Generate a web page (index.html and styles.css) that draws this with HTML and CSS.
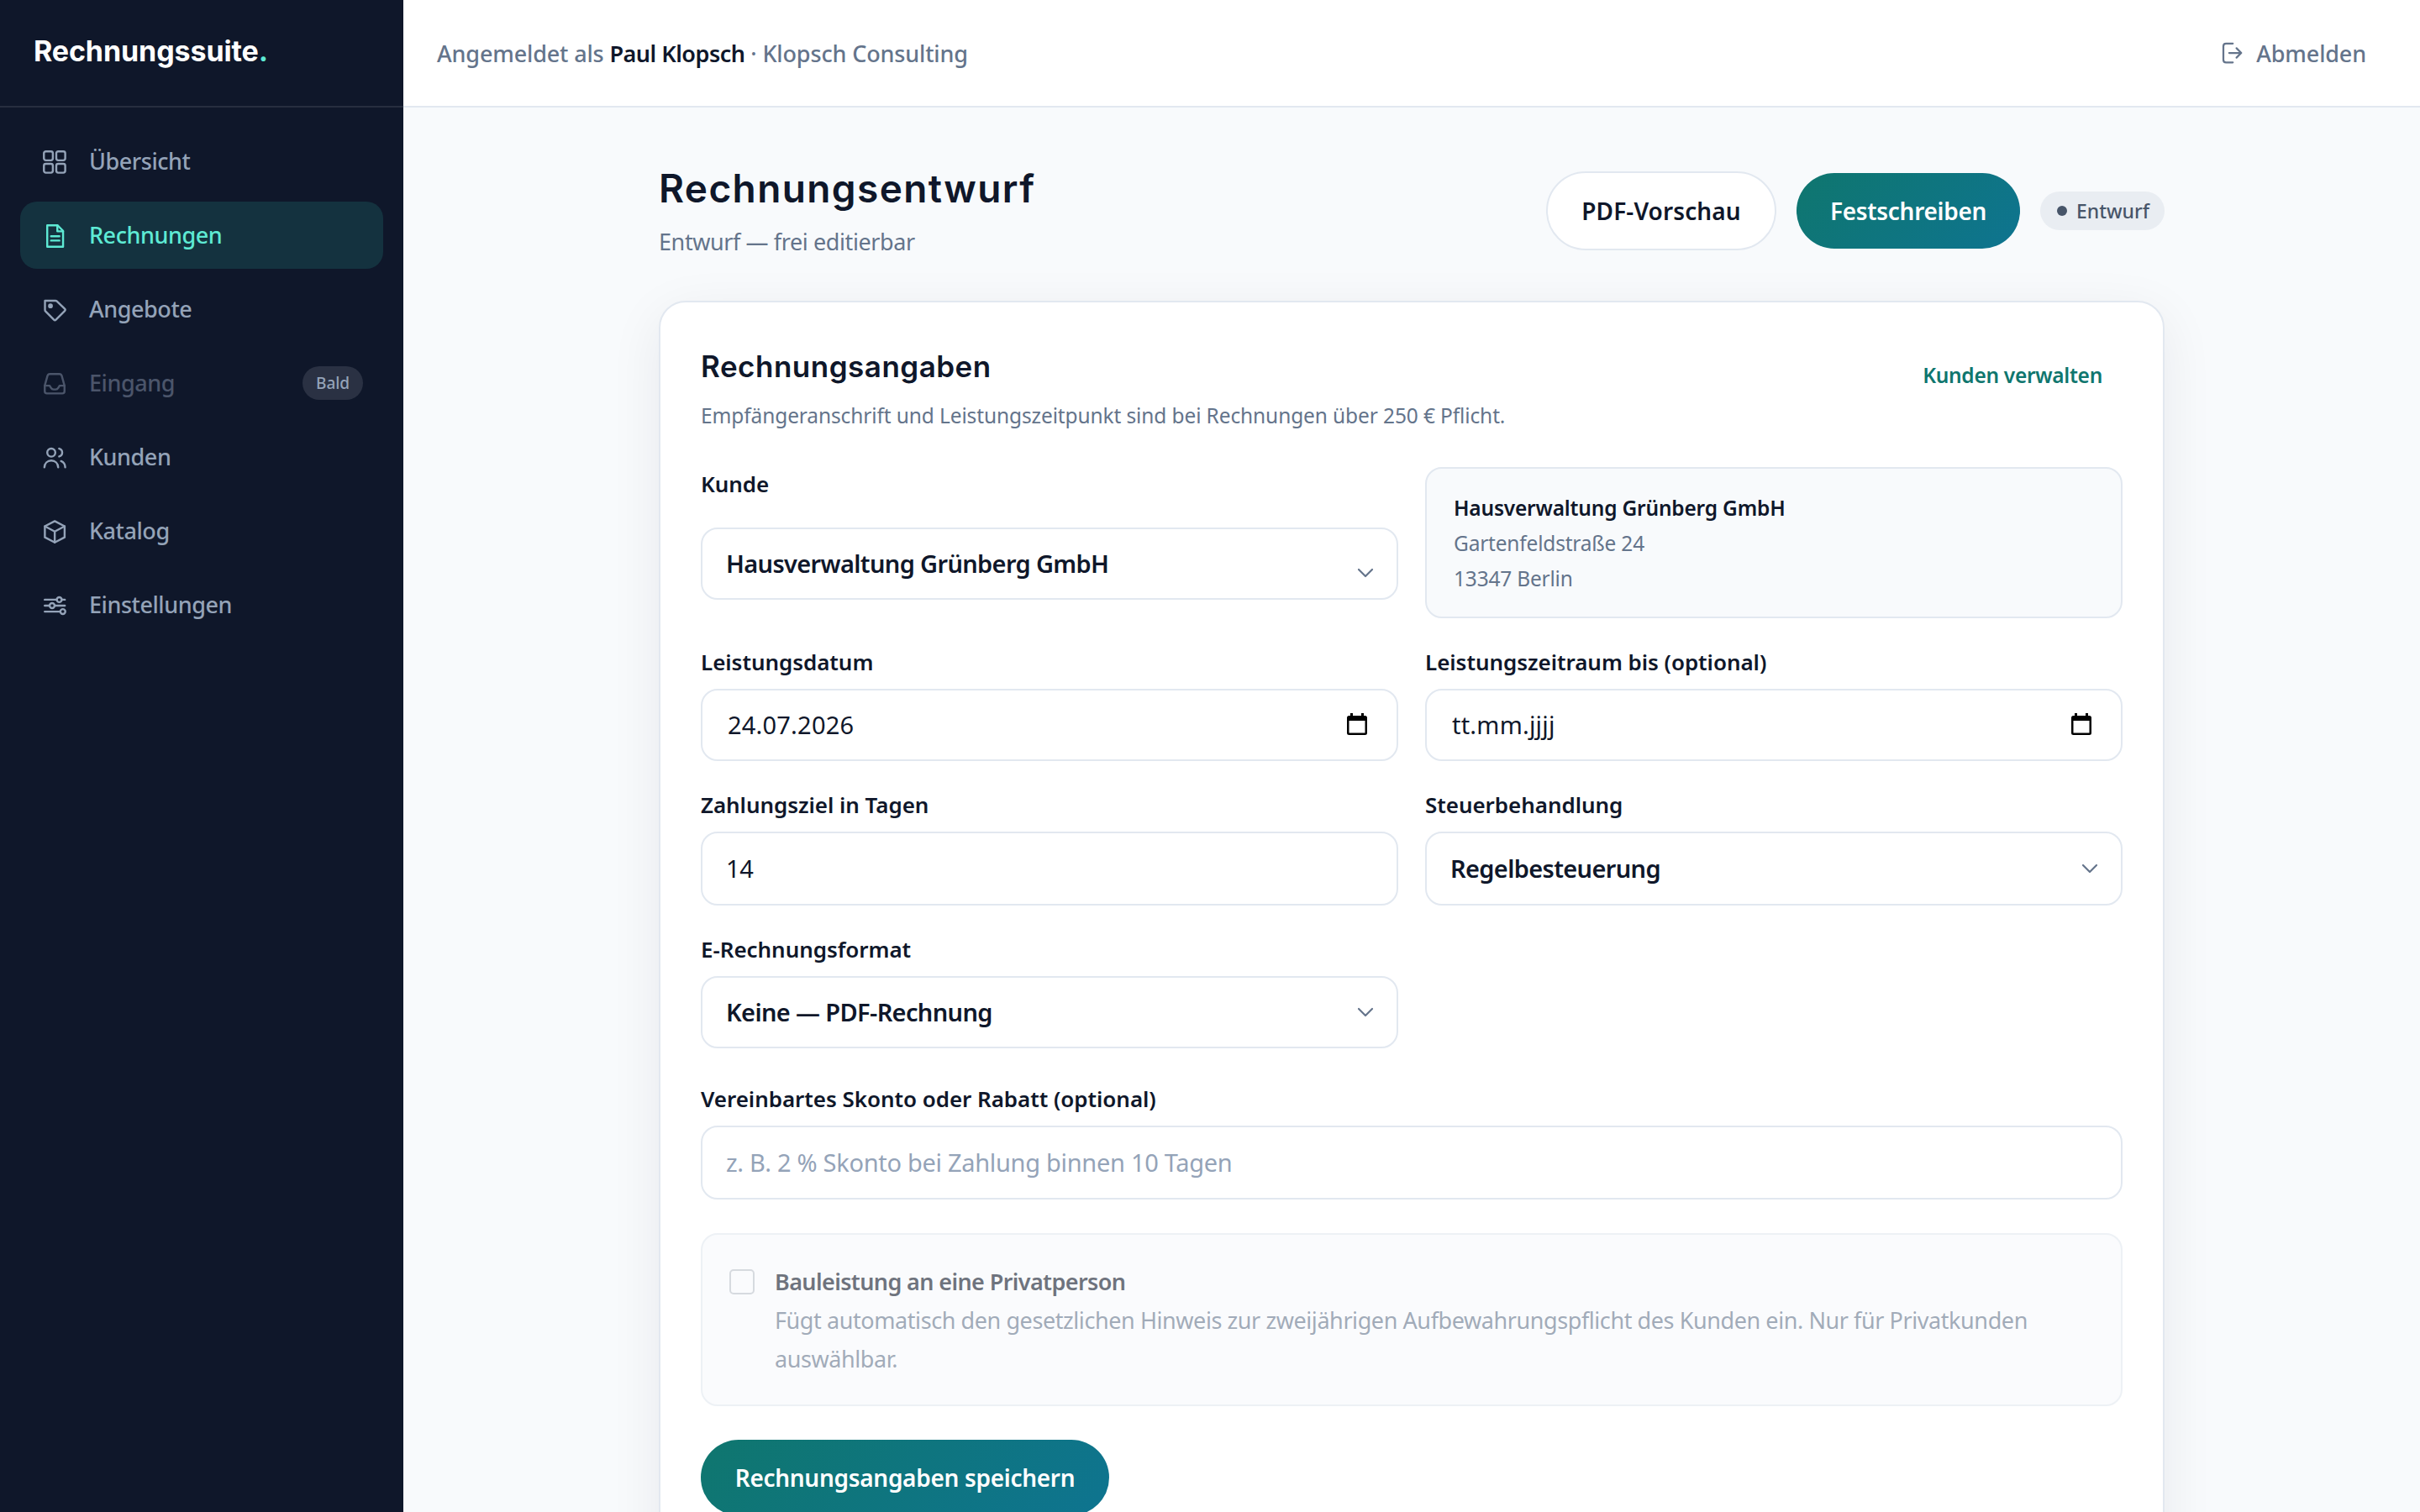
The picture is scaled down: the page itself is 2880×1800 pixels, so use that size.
FILE: index.html
```html
<!DOCTYPE html>
<html lang="de">
<head>
    <meta charset="UTF-8">
    <meta name="viewport" content="width=device-width, initial-scale=1.0">
    <title>Rechnungsentwurf - Rechnungssuite</title>
    <link rel="stylesheet" href="styles.css">
</head>
<body>
    <aside class="sidebar">
        <div class="brand">Rechnungssuite<span class="brand-dot">.</span></div>
        <nav class="nav">
            <a class="nav-item">
                <svg class="icon" viewBox="0 0 24 24"><rect x="3" y="3" width="7.5" height="7.5" rx="1.6"/><rect x="13.4" y="3" width="7.5" height="7.5" rx="1.6"/><rect x="3" y="13.4" width="7.5" height="7.5" rx="1.6"/><rect x="13.4" y="13.4" width="7.5" height="7.5" rx="1.6"/></svg>
                <span>Übersicht</span>
            </a>
            <a class="nav-item active">
                <svg class="icon" viewBox="0 0 24 24"><path d="M5.8 3h8.7l4.6 4.6V21H5.8z"/><path d="M14.3 3v5h4.8M9 12.2h7M9 15.8h7"/></svg>
                <span>Rechnungen</span>
            </a>
            <a class="nav-item">
                <svg class="icon" viewBox="0 0 24 24"><path d="M3.9 4.2h8.8c.5 0 .9.2 1.2.5l6.6 6.4c.5.5.5 1.2 0 1.7l-7.4 7.4c-.5.5-1.2.5-1.7 0l-7-7c-.3-.3-.5-.7-.5-1.2z"/><circle class="dot" cx="8.5" cy="8.6" r="2"/></svg>
                <span>Angebote</span>
            </a>
            <a class="nav-item disabled">
                <svg class="icon" viewBox="0 0 24 24"><path d="M3.7 13.5h4.1l1.1 1.8c.5.9 1.3 1.4 2.2 1.4h1.8c.9 0 1.7-.5 2.2-1.4l1.1-1.8h4.1"/><path d="M3.7 13.5 6 5.2c.3-.9 1-1.5 2-1.5h8c1 0 1.7.6 2 1.5l2.3 8.3v4.7c0 1.1-.8 1.8-1.8 1.8h-13c-1 0-1.8-.7-1.8-1.8z"/></svg>
                <span>Eingang</span>
                <span class="soon">Bald</span>
            </a>
            <a class="nav-item">
                <svg class="icon" viewBox="0 0 24 24"><circle cx="9.2" cy="7.6" r="3.4"/><path d="M3.4 20c.2-3.3 2.5-5.7 5.8-5.7s5.6 2.4 5.8 5.7M15.8 4.3a3.4 3.4 0 0 1 0 6.6M17.4 14.8c2.1.8 3.4 2.7 3.5 5.2"/></svg>
                <span>Kunden</span>
            </a>
            <a class="nav-item">
                <svg class="icon" viewBox="0 0 24 24"><path d="M12.1 3.1l8.3 4.3v9.3l-8.3 4.3-8.3-4.3V7.4z"/><path d="M3.8 7.4l8.3 4.4 8.3-4.4M12.1 11.8V21"/></svg>
                <span>Katalog</span>
            </a>
            <a class="nav-item">
                <svg class="icon" viewBox="0 0 24 24"><path d="M3.7 7h10M18 7h2.6M3.7 12h4M12 12h8.6M3.7 17h13"/><circle cx="15.9" cy="7" r="2.1"/><circle cx="9.9" cy="12" r="2.1"/><circle cx="18.9" cy="17" r="2.1"/></svg>
                <span>Einstellungen</span>
            </a>
        </nav>
    </aside>

    <div class="page">
        <header class="topbar">
            <div class="user">Angemeldet als <strong>Paul Klopsch</strong> · Klopsch Consulting</div>
            <a class="logout">
                <svg class="logout-icon" viewBox="0 0 24 24"><path d="M13 3H6.5C5.1 3 4 4.1 4 5.5v13C4 19.9 5.1 21 6.5 21H13M9.5 12H21M16.5 7.5L21 12l-4.5 4.5"/></svg>
                <span>Abmelden</span>
            </a>
        </header>

        <main class="content">
            <div class="page-head">
                <div>
                    <h1>Rechnungsentwurf</h1>
                    <p class="subtitle">Entwurf — frei editierbar</p>
                </div>
                <div class="actions">
                    <button class="btn btn-light">PDF-Vorschau</button>
                    <button class="btn btn-primary">Festschreiben</button>
                    <span class="status">Entwurf</span>
                </div>
            </div>

            <section class="card">
                <div class="card-head">
                    <div>
                        <h2>Rechnungsangaben</h2>
                        <p class="hint">Empfängeranschrift und Leistungszeitpunkt sind bei Rechnungen über 250 € Pflicht.</p>
                    </div>
                    <a class="link">Kunden verwalten</a>
                </div>

                <div class="form-grid">
                    <div class="field field-customer">
                        <label>Kunde</label>
                        <div class="control">
                            <select><option>Hausverwaltung Grünberg GmbH</option></select>
                            <svg class="chevron" viewBox="0 0 20 12"><path d="M2 2l8 8 8-8"/></svg>
                        </div>
                    </div>
                    <div class="address">
                        <strong>Hausverwaltung Grünberg GmbH</strong>
                        <span>Gartenfeldstraße 24</span>
                        <span>13347 Berlin</span>
                    </div>
                    <div class="field">
                        <label>Leistungsdatum</label>
                        <div class="control">
                            <input class="date" type="text" value="24.07.2026">
                            <svg class="calendar" viewBox="0 0 24 26"><path d="M4 0h3v3h10V0h3v3h1.5A2.5 2.5 0 0 1 24 5.5v18a2.5 2.5 0 0 1-2.5 2.5h-19A2.5 2.5 0 0 1 0 23.5v-18A2.5 2.5 0 0 1 2.5 3H4zM2.5 9v14.5h19V9z"/></svg>
                        </div>
                    </div>
                    <div class="field">
                        <label>Leistungszeitraum bis (optional)</label>
                        <div class="control">
                            <input class="date" type="text" value="tt.mm.jjjj">
                            <svg class="calendar" viewBox="0 0 24 26"><path d="M4 0h3v3h10V0h3v3h1.5A2.5 2.5 0 0 1 24 5.5v18a2.5 2.5 0 0 1-2.5 2.5h-19A2.5 2.5 0 0 1 0 23.5v-18A2.5 2.5 0 0 1 2.5 3H4zM2.5 9v14.5h19V9z"/></svg>
                        </div>
                    </div>
                    <div class="field">
                        <label>Zahlungsziel in Tagen</label>
                        <div class="control tall">
                            <input type="text" value="14">
                        </div>
                    </div>
                    <div class="field">
                        <label>Steuerbehandlung</label>
                        <div class="control tall">
                            <select><option>Regelbesteuerung</option></select>
                            <svg class="chevron" viewBox="0 0 20 12"><path d="M2 2l8 8 8-8"/></svg>
                        </div>
                    </div>
                    <div class="field">
                        <label>E-Rechnungsformat</label>
                        <div class="control">
                            <select><option>Keine — PDF-Rechnung</option></select>
                            <svg class="chevron" viewBox="0 0 20 12"><path d="M2 2l8 8 8-8"/></svg>
                        </div>
                    </div>
                </div>

                <div class="field">
                    <label>Vereinbartes Skonto oder Rabatt (optional)</label>
                    <div class="control tall">
                        <input type="text" placeholder="z. B. 2 % Skonto bei Zahlung binnen 10 Tagen">
                    </div>
                </div>

                <div class="check-box">
                    <input type="checkbox" disabled>
                    <div>
                        <strong>Bauleistung an eine Privatperson</strong>
                        <p>Fügt automatisch den gesetzlichen Hinweis zur zweijährigen Aufbewahrungspflicht des Kunden ein. Nur für Privatkunden auswählbar.</p>
                    </div>
                </div>

                <button class="btn btn-primary btn-save">Rechnungsangaben speichern</button>
            </section>
        </main>
    </div>
</body>
</html>
```

FILE: styles.css
```css
* {
    box-sizing: border-box;
    margin: 0;
    padding: 0;
}

body {
    display: flex;
    height: 1800px;
    overflow: hidden;
    font-family: "Noto Sans", sans-serif;
    font-size: 27px;
    color: #0f172a;
    background: #f8fafc;
}

/* Sidebar */
.sidebar {
    width: 480px;
    height: 1800px;
    flex-shrink: 0;
    background: #0f172a;
}

.brand {
    display: flex;
    align-items: center;
    height: 128px;
    padding: 0 40px 6px;
    border-bottom: 2px solid #272e3f;
    font-family: Inter, sans-serif;
    font-size: 34px;
    font-weight: 700;
    letter-spacing: -0.1px;
    color: #fff;
}

.brand-dot {
    color: #5eead4;
}

.nav {
    display: flex;
    flex-direction: column;
    gap: 8px;
    padding: 24px;
}

.nav-item {
    display: flex;
    align-items: center;
    gap: 24px;
    height: 80px;
    padding: 0 24px 2px;
    border-radius: 20px;
    font-weight: 500;
    letter-spacing: -0.45px;
    color: #94a3b8;
}

.nav-item.active {
    background: #14323f;
    color: #5eead4;
}

.nav-item.disabled {
    color: #4b556a;
}

.icon {
    width: 34px;
    height: 34px;
    margin-top: 4px;
    fill: none;
    stroke: currentColor;
    stroke-width: 1.7;
    stroke-linecap: round;
    stroke-linejoin: round;
}

.icon .dot {
    fill: currentColor;
    stroke: none;
}

.soon {
    margin: 2px 0 0 auto;
    width: 72px;
    border-radius: 20px;
    background: #2a3143;
    font-size: 19px;
    letter-spacing: -0.1px;
    line-height: 40px;
    text-align: center;
    color: #94a3b8;
}

/* Topbar */
.page {
    flex: 1;
    height: 1800px;
    overflow: hidden;
}

.topbar {
    display: flex;
    justify-content: space-between;
    align-items: center;
    height: 128px;
    padding: 0 64px 0 40px;
    border-bottom: 2px solid #e2e8f0;
    background: #fff;
    font-weight: 500;
    letter-spacing: -0.15px;
    color: #64748b;
}

.user strong {
    font-weight: 600;
    letter-spacing: -0.5px;
    color: #0f172a;
}

.logout {
    display: flex;
    align-items: center;
    gap: 14px;
}

.logout-icon {
    width: 30px;
    height: 30px;
    fill: none;
    stroke: currentColor;
    stroke-width: 1.8;
    stroke-linecap: round;
    stroke-linejoin: round;
}

/* Page head */
.content {
    width: 1792px;
    margin: 0 auto;
    padding-top: 66px;
}

.page-head {
    display: flex;
    justify-content: space-between;
    align-items: center;
    height: 114px;
    margin-bottom: 50px;
}

h1 {
    font-family: Inter, sans-serif;
    font-size: 46px;
    font-weight: 600;
    letter-spacing: 1.4px;
    line-height: 60px;
}

.subtitle {
    margin-top: 13px;
    letter-spacing: -0.4px;
    line-height: 42px;
    color: #64748b;
}

.actions {
    display: flex;
    align-items: center;
    gap: 24px;
}

.btn {
    height: 90px;
    border: none;
    border-radius: 45px;
    font-family: inherit;
    font-size: 28px;
    font-weight: 600;
    letter-spacing: -0.3px;
    white-space: nowrap;
}

.btn-light {
    width: 274px;
    height: 94px;
    border: 2px solid #e2e8f0;
    border-radius: 47px;
    background: #fff;
    letter-spacing: 0.1px;
    color: #0f172a;
}

.btn-primary {
    width: 266px;
    background: linear-gradient(135deg, #0f766e, #0e7490);
    color: #fff;
}

.status {
    display: flex;
    align-items: center;
    gap: 11px;
    width: 148px;
    height: 46px;
    padding-left: 20px;
    border-radius: 23px;
    background: #e9edf2;
    font-size: 23px;
    font-weight: 500;
    color: #475569;
}

.status::before {
    content: "";
    width: 12px;
    height: 12px;
    border-radius: 50%;
    background: #475569;
}

/* Card */
.card {
    height: 1600px;
    padding: 48px;
    border: 2px solid #e2e8f0;
    border-radius: 32px;
    background: #fff;
    box-shadow: 0 16px 64px rgba(15, 23, 42, 0.07);
}

.card-head {
    display: flex;
    justify-content: space-between;
    height: 106px;
    margin-bottom: 42px;
}

h2 {
    font-family: Inter, sans-serif;
    font-size: 35px;
    font-weight: 600;
    letter-spacing: 0.5px;
    line-height: 56px;
}

.hint {
    margin-top: 11px;
    font-size: 24.5px;
    letter-spacing: -0.12px;
    line-height: 40px;
    color: #64748b;
}

.link {
    padding: 19px 24px 0 0;
    font-size: 24.5px;
    font-weight: 600;
    letter-spacing: -0.3px;
    line-height: 40px;
    color: #0f766e;
}

/* Form */
.form-grid {
    display: grid;
    grid-template-columns: 1fr 1fr;
    gap: 32px;
    margin-bottom: 40px;
}

.field label {
    display: block;
    margin-bottom: 12px;
    font-size: 26px;
    font-weight: 600;
    letter-spacing: -0.05px;
    line-height: 40px;
}

.field-customer label {
    margin-bottom: 32px;
}

.control {
    display: flex;
    align-items: center;
    height: 86px;
    padding: 0 27px 0 28px;
    border: 2px solid #e2e8f0;
    border-radius: 20px;
    background: #fff;
}

.control.tall {
    height: 88px;
}

.control input,
.control select {
    flex: 1;
    padding-bottom: 2px;
    border: none;
    outline: none;
    appearance: none;
    background: none;
    font-family: inherit;
    font-size: 29px;
    letter-spacing: -0.3px;
    color: #0f172a;
}

.control select {
    font-weight: 600;
    letter-spacing: -0.65px;
}

.control .date {
    padding-left: 2px;
    letter-spacing: 0.2px;
}

.control input::placeholder {
    color: #94a3b8;
}

.chevron {
    width: 20px;
    height: 12px;
    fill: none;
    stroke: #64748b;
    stroke-width: 2.2;
    stroke-linecap: round;
    stroke-linejoin: round;
}

.field-customer .chevron {
    margin-top: 22px;
}

.calendar {
    width: 24px;
    height: 26px;
    margin: 0 8px 2px 0;
    fill: #000;
}

.address {
    display: flex;
    flex-direction: column;
    height: 180px;
    padding: 26px 32px 24px;
    border: 2px solid #e2e8f0;
    border-radius: 20px;
    background: #f8fafc;
    font-size: 24.5px;
    letter-spacing: -0.2px;
    line-height: 42px;
    color: #64748b;
}

.address strong {
    font-weight: 600;
    color: #0f172a;
}

.check-box {
    display: flex;
    gap: 24px;
    margin: 40px 0;
    padding: 33px 32px 31px;
    border: 2px solid #e2e8f0;
    border-radius: 20px;
    background: #f8fafc;
    letter-spacing: -0.42px;
    line-height: 46px;
    color: #64748b;
    opacity: 0.6;
}

.check-box strong {
    display: block;
    font-weight: 600;
    letter-spacing: -0.62px;
    color: #0f172a;
}

.check-box input {
    flex-shrink: 0;
    width: 30px;
    height: 30px;
    margin-top: 8px;
    appearance: none;
    border: 2px solid #bcc2cb;
    border-radius: 5px;
}

.btn-save {
    width: 486px;
}
```
